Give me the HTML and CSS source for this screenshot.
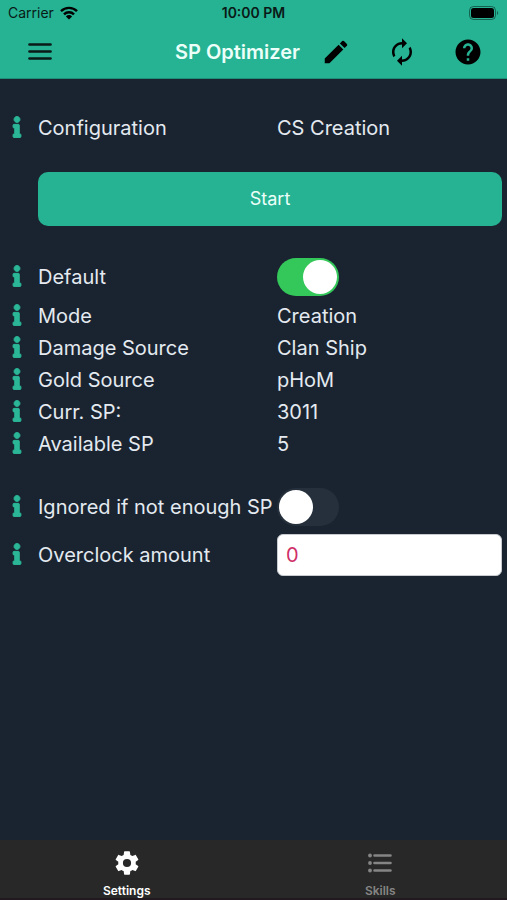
FILE: index.html
```html
<!DOCTYPE html>
<html lang="en">
<head>
<meta charset="utf-8">
<meta name="viewport" content="width=device-width, initial-scale=1">
<title>SP Optimizer</title>
<link rel="stylesheet" href="styles.css">
</head>
<body>
<svg class="defs" aria-hidden="true">
  <symbol id="info" viewBox="-20 -12 232 536"><path stroke="currentColor" stroke-width="22" d="M20 424.229h20V279.771H20c-11.046 0-20-8.954-20-20V212c0-11.046 8.954-20 20-20h112c11.046 0 20 8.954 20 20v212.229h20c11.046 0 20 8.954 20 20V492c0 11.046-8.954 20-20 20H20c-11.046 0-20-8.954-20-20v-47.771c0-11.046 8.954-20 20-20zM96 0C56.235 0 24 32.235 24 72s32.235 72 72 72 72-32.235 72-72S135.764 0 96 0z"/></symbol>
</svg>
<header class="header">
  <div class="status">
    <div class="carrier">
      <span>Carrier</span>
      <svg class="wifi" viewBox="0 0 18 14"><g fill="none" stroke="currentColor" stroke-width="2.4"><path d="M1 5.2a11.3 11.3 0 0 1 16 0"/><path d="M4 8.3a7 7 0 0 1 10 0"/></g><path d="M9 13.5 5.9 10.4a4.4 4.4 0 0 1 6.2 0z"/></svg>
    </div>
    <span class="time">10:00 PM</span>
    <svg class="battery" viewBox="0 0 30 14"><rect x=".5" y=".5" width="26" height="13" rx="4" fill="none" stroke="currentColor" opacity=".45"/><rect x="2" y="2" width="23" height="10" rx="2.5"/><path d="M28 5v4c1.600-.6 1.600-3.400 0-4z" opacity=".45"/></svg>
  </div>
  <nav class="nav">
    <button class="icon-button" aria-label="Menu"><svg viewBox="0 0 30 30"><path d="M4.500 7.500h21M4.500 14.500h21M4.500 21.500h21" fill="none" stroke="currentColor" stroke-width="2.700" stroke-linecap="round"/></svg></button>
    <h1 class="title">SP Optimizer</h1>
    <div class="actions">
      <button class="icon-button" aria-label="Edit"><svg viewBox="0 0 24 24"><path d="M3 17.250V21h3.750L17.810 9.940l-3.750-3.750L3 17.250zM20.710 7.040a1 1 0 0 0 0-1.410l-2.340-2.340a1 1 0 0 0-1.410 0l-1.830 1.830 3.750 3.750 1.830-1.830z"/></svg></button>
      <button class="icon-button" aria-label="Refresh"><svg viewBox="0 0 24 24"><path d="M12 6v3l4-4-4-4v3c-4.420 0-8 3.580-8 8 0 1.570.46 3.030 1.240 4.260L6.700 14.800A5.870 5.870 0 0 1 6 12c0-3.310 2.690-6 6-6zm6.760 1.740L17.300 9.200c.44.84.7 1.790.7 2.800 0 3.310-2.690 6-6 6v-3l-4 4 4 4v-3c4.420 0 8-3.580 8-8 0-1.570-.46-3.030-1.240-4.260z"/></svg></button>
      <button class="icon-button" aria-label="Help"><svg viewBox="0 0 24 24"><path d="M12 2C6.480 2 2 6.480 2 12s4.480 10 10 10 10-4.480 10-10S17.520 2 12 2zm1 17h-2v-2h2v2zm2.070-7.750-.9.920C13.450 12.900 13 13.500 13 15h-2v-.5c0-1.100.45-2.100 1.170-2.830l1.240-1.260c.37-.36.59-.86.59-1.410 0-1.100-.9-2-2-2s-2 .9-2 2H8c0-2.210 1.790-4 4-4s4 1.790 4 4c0 .88-.36 1.680-.93 2.250z"/></svg></button>
    </div>
  </nav>
</header>
<main class="settings">
  <div class="row">
    <button class="info" aria-label="About Configuration"><svg><use href="#info"/></svg></button>
    <span>Configuration</span><span>CS Creation</span>
  </div>
  <button class="start">Start</button>
  <section class="group">
    <div class="row row-switch">
      <button class="info" aria-label="About Default"><svg><use href="#info"/></svg></button>
      <label for="default">Default</label><input class="switch" type="checkbox" role="switch" id="default" checked>
    </div>
    <div class="row">
      <button class="info" aria-label="About Mode"><svg><use href="#info"/></svg></button>
      <span>Mode</span><span>Creation</span>
    </div>
    <div class="row">
      <button class="info" aria-label="About Damage Source"><svg><use href="#info"/></svg></button>
      <span>Damage Source</span><span>Clan Ship</span>
    </div>
    <div class="row">
      <button class="info" aria-label="About Gold Source"><svg><use href="#info"/></svg></button>
      <span>Gold Source</span><span>pHoM</span>
    </div>
    <div class="row">
      <button class="info" aria-label="About Curr. SP"><svg><use href="#info"/></svg></button>
      <span>Curr. SP:</span><span>3011</span>
    </div>
    <div class="row">
      <button class="info" aria-label="About Available SP"><svg><use href="#info"/></svg></button>
      <span>Available SP</span><span>5</span>
    </div>
  </section>
  <section class="group">
    <div class="row row-switch">
      <button class="info" aria-label="About Ignored if not enough SP"><svg><use href="#info"/></svg></button>
      <label for="ignored">Ignored if not enough SP</label><input class="switch" type="checkbox" role="switch" id="ignored">
    </div>
    <div class="row">
      <button class="info" aria-label="About Overclock amount"><svg><use href="#info"/></svg></button>
      <label for="overclock">Overclock amount</label><input class="amount" type="text" inputmode="numeric" id="overclock" value="0">
    </div>
  </section>
</main>
<nav class="tabs">
  <a class="tab tab-active" href="#settings" aria-current="page">
    <svg viewBox="0 0 24 24"><path d="M19.430 12.980c.04-.32.07-.64.07-.98s-.03-.66-.07-.98l2.110-1.650c.19-.15.24-.42.12-.64l-2-3.460c-.12-.22-.39-.3-.61-.22l-2.490 1c-.52-.4-1.080-.73-1.690-.98l-.38-2.650A.49.49 0 0 0 14 2h-4c-.25 0-.46.18-.49.42l-.38 2.650c-.61.25-1.170.59-1.690.98l-2.490-1c-.23-.09-.49 0-.61.22l-2 3.460c-.13.22-.07.49.12.64l2.110 1.650c-.04.32-.07.65-.07.98s.03.66.07.98l-2.110 1.650c-.19.15-.24.42-.12.64l2 3.460c.12.22.39.3.61.22l2.490-1c.52.4 1.080.73 1.690.98l.38 2.650c.03.24.24.42.49.42h4c.25 0 .46-.18.49-.42l.38-2.650c.61-.25 1.170-.59 1.690-.98l2.490 1c.23.09.49 0 .61-.22l2-3.460c.12-.22.07-.49-.12-.64l-2.110-1.650zM12 15.500a3.500 3.500 0 1 1 0-7 3.500 3.500 0 0 1 0 7z"/></svg>
    <span>Settings</span>
  </a>
  <a class="tab" href="#skills">
    <svg viewBox="0 0 28 28"><g fill="none" stroke="currentColor" stroke-width="2.600" stroke-linecap="round"><path d="M8.500 6.500h16M8.500 14h16M8.500 21.500h16"/></g><circle cx="4" cy="6.500" r="1.900"/><circle cx="4" cy="14" r="1.900"/><circle cx="4" cy="21.500" r="1.900"/></svg>
    <span>Skills</span>
  </a>
</nav>
</body>
</html>
```
FILE: styles.css
```css
* { box-sizing: border-box; }

body {
  margin: 0;
  min-height: 100vh;
  display: flex;
  flex-direction: column;
  background: #1a2430;
  color: #e4eaf0;
  font: 20px/32px Inter, "Liberation Sans", sans-serif;
}

button, input { font: inherit; }
button { border: 0; padding: 0; background: none; color: inherit; }
svg { display: block; fill: currentColor; }
.defs { display: none; }

.header { background: #25b393; color: #0a1a17; }

.status {
  display: grid;
  grid-template-columns: 1fr auto 1fr;
  align-items: center;
  height: 26px;
  padding: 0 8px;
  font-size: 14px;
  line-height: 26px;
}
.carrier { display: flex; align-items: center; gap: 6px; }
.wifi { width: 18px; height: 14px; color: #000; }
.time { font-weight: 600; }
.battery { width: 30px; height: 14px; color: #000; justify-self: end; }

.nav {
  display: grid;
  grid-template-columns: 80px 1fr auto;
  align-items: center;
  column-gap: 21px;
  height: 53px;
  padding-right: 24px;
  border-bottom: 1px solid #1e8f79;
}
.icon-button svg { width: 30px; height: 30px; }
.nav > .icon-button { justify-self: center; }
.title { margin: 0; text-align: right; font-size: 20px; font-weight: 600; color: #ecfff9; }
.actions { display: flex; gap: 36px; color: #000; }

.settings {
  flex: 1;
  display: flex;
  flex-direction: column;
  padding: 33px 5px 0 0;
}
.row {
  display: grid;
  grid-template-columns: 38px 239fr 225fr;
  align-items: center;
  min-height: 32px;
  white-space: nowrap;
}
.row-switch { margin-bottom: 4px; }
.info { padding: 0 0 2px 12px; color: #2bb797; }
.info svg { width: 10px; height: 22px; }

.start {
  height: 54px;
  margin: 28px 0 0 38px;
  border-radius: 10px;
  background: #25b393;
  color: #ecfff9;
  font-size: 18px;
}
.group { margin-top: 32px; }
.group + .group { margin-top: 28px; }

.switch {
  appearance: none;
  display: flex;
  align-items: center;
  width: 62px;
  height: 38px;
  margin: 0;
  padding: 2px;
  border-radius: 19px;
  background: #25303c;
}
.switch::before {
  content: "";
  width: 34px;
  height: 34px;
  border-radius: 50%;
  background: #fff;
}
.switch:checked { justify-content: flex-end; background: #34c759; }

.amount {
  width: 100%;
  min-width: 0;
  height: 42px;
  margin: 4px 0;
  padding: 0 8px;
  border: 1px solid #c8ccd0;
  border-radius: 6px;
  background: #fff;
  color: #cf3068;
}

.tabs {
  display: grid;
  grid-template-columns: 1fr 1fr;
  height: 60px;
  background: #282828;
  border-bottom: 2px solid #211820;
}
.tab {
  display: flex;
  flex-direction: column;
  align-items: center;
  padding-top: 9px;
  gap: 6px;
  color: #858585;
  font-size: 12px;
  font-weight: 600;
  line-height: 16px;
  text-decoration: none;
}
.tab svg { width: 28px; height: 28px; }
.tab-active { color: #fff; }
```
